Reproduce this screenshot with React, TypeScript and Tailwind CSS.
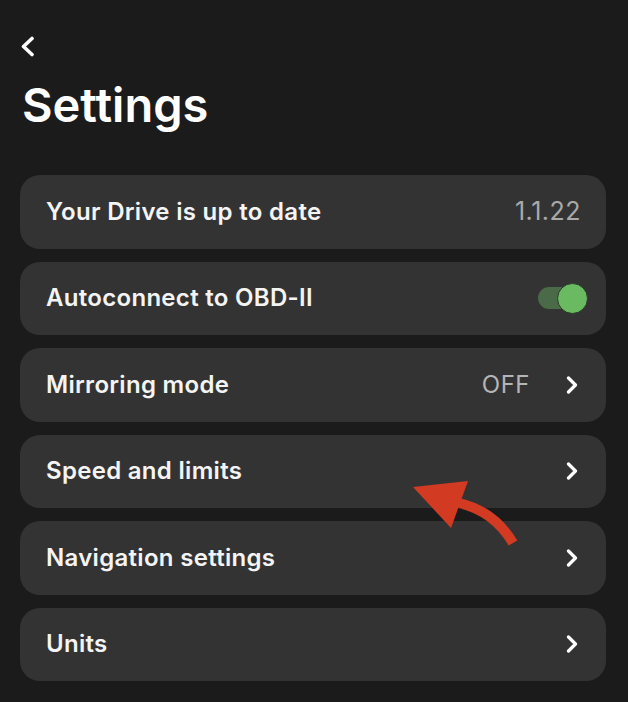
import type { ReactNode } from 'react'

const ChevronRight = () => (
  <svg width="12" height="18" viewBox="0 0 12 18" fill="none" className="shrink-0">
    <path d="M2.5 2 L9.5 9 L2.5 16" stroke="#ffffff" strokeWidth="3.2" strokeLinecap="round" strokeLinejoin="round" />
  </svg>
)

const Toggle = () => (
  <div className="relative w-[50px] h-[31px] flex items-center">
    <div className="w-[48px] h-[22px] rounded-full bg-[#4b6a47]" />
    <div className="absolute right-0 top-0 w-[31px] h-[31px] rounded-full bg-[#6aba61] border border-[#2a3a28]" />
  </div>
)

function Row({ label, right, pr = 'pr-[28px]' }: { label: string; right?: ReactNode; pr?: string }) {
  return (
    <div className={`flex items-center justify-between h-[73.5px] rounded-[20px] bg-[#333333] pl-[26px] ${pr}`}>
      <span className="text-[24px] font-semibold tracking-[0.3px] text-[#f4f4f4]">{label}</span>
      {right}
    </div>
  )
}

export default function App() {
  return (
    <div
      className="relative min-h-screen h-[702px] bg-[#1b1b1b] pl-[20px] pr-[22px] pt-[36px] overflow-hidden"
      style={{ fontFamily: 'Inter, "Noto Sans", sans-serif' }}
    >
      {/* Back */}
      <svg width="16" height="21" viewBox="0 0 16 21" fill="none">
        <path d="M12 2.5 L3.5 10.5 L12 18.5" stroke="#ffffff" strokeWidth="3.6" strokeLinecap="round" strokeLinejoin="round" />
      </svg>

      <h1 className="mt-[24px] ml-[2px] text-[47px] leading-none font-semibold text-white">Settings</h1>

      <div className="mt-[47px] flex flex-col gap-[13px]">
        <Row label="Your Drive is up to date" pr="pr-[25px]" right={<span className="text-[25px] tracking-[0.5px] text-[#a9a9a9]">1.1.22</span>} />
        <Row label="Autoconnect to OBD-II" pr="pr-[18px]" right={<Toggle />} />
        <Row
          label="Mirroring mode"
          right={
            <div className="flex items-center gap-[36px]">
              <span className="text-[24px] tracking-[0.5px] text-[#b5b5b5]">OFF</span>
              <ChevronRight />
            </div>
          }
        />
        <Row label="Speed and limits" right={<ChevronRight />} />
        <Row label="Navigation settings" right={<ChevronRight />} />
        <Row label="Units" right={<ChevronRight />} />
      </div>

      {/* Annotation arrow */}
      <svg className="absolute left-[400px] top-[475px]" width="130" height="80" viewBox="400 475 130 80" fill="none">
        <path d="M459 503 Q494 511 513 543" stroke="#d23b22" strokeWidth="10" />
        <polygon points="413,487 468,481 451,528" fill="#d23b22" />
      </svg>
    </div>
  )
}
